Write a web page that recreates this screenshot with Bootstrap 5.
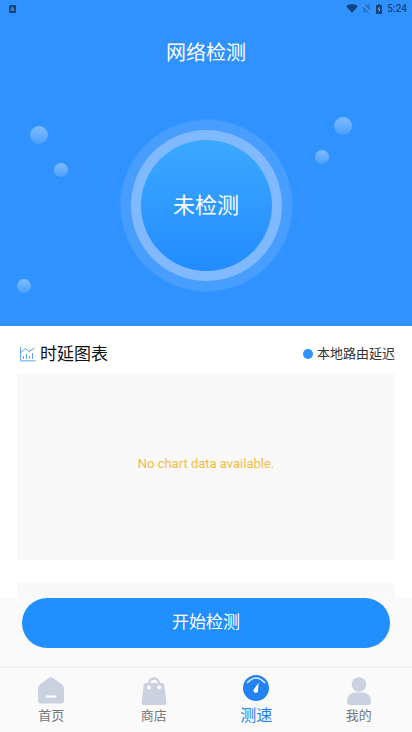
<!DOCTYPE html>
<html lang="zh-CN">
<head>
<meta charset="utf-8">
<meta name="viewport" content="width=device-width, initial-scale=1">
<title>网络检测</title>
<link href="https://cdn.jsdelivr.net/npm/bootstrap@5.3.0/dist/css/bootstrap.min.css" rel="stylesheet">
<style>
body { font-family: Roboto, "Noto Sans CJK SC", sans-serif; background: #fff; color: #111; }
.scroller { scrollbar-width: none; min-height: 0; }
.scroller::-webkit-scrollbar { display: none; }
.hero { background: #2f92ff; padding-bottom: 34px; }
.status-bar { height: 17px; padding: 0 5px 0 9px; color: #12447f; font-size: 10px; line-height: 17px; font-weight: 500; }
.page-title { font-size: 20px; line-height: 28px; margin: 22px 0 52px; font-weight: 400; }
.halo { width: 173px; height: 173px; background: #479eff; border: 1px solid #3c98ff; }
.ring { width: 151px; height: 151px; background: #80b9ff; }
.dial { width: 131px; height: 131px; font-size: 22px; background: linear-gradient(#3ba9ff, #228cff); }
.bubble { position: absolute; width: 14px; height: 14px; border-radius: 50%; background: linear-gradient(#80bbff, #4ba0ff); }
.bubble-lg { width: 18px; height: 18px; }
.b1 { left: 7.2%; top: 126px; }
.b2 { left: 13.2%; top: 163px; }
.b3 { left: 4.2%; top: 279px; }
.b4 { right: 14.5%; top: 117px; }
.b5 { right: 20.2%; top: 150px; }
.content { padding: 0 17px; }
.chart-head { height: 48px; padding: 8px 0 0 3px; }
.section-title { font-size: 17px; line-height: 24px; font-weight: 400; margin: 0; }
.legend-text { font-size: 13px; color: #333; }
.dot { width: 10px; height: 10px; background: #2f92ff; }
.panel { height: 186px; padding-bottom: 6px; background: #f9f9f9; color: #f0bd42; font-size: 13px; margin-bottom: 23px; }
.dock { background: #fafafa; }
.action { padding: 0 22px 18px; }
.start { height: 50px; background: #208fff; font-size: 17px; }
.start:hover { background: #1783f0; }
.tabs { height: 66px; padding-right: 2px; border-top: 2px solid #f3f3f3; }
.tab { color: #777; font-size: 13px; line-height: 20px; padding-bottom: 6px; }
.tab.active { color: #2482ee; font-size: 16px; }
.tab svg { margin-bottom: 1px; }
</style>
<script src="https://cdn.jsdelivr.net/npm/bootstrap@5.3.0/dist/js/bootstrap.bundle.min.js"></script>
</head>
<body>
<div class="vh-100 d-flex flex-column">
  <main class="scroller flex-grow-1 overflow-auto">
    <header class="hero position-relative text-white text-center">
      <div class="status-bar d-flex align-items-center">
        <svg width="7" height="8" viewBox="0 0 7 8" aria-hidden="true"><rect width="7" height="8" rx="1" fill="#12447f"/><path d="M1.7 6 3.5 2.2 5.3 6M2.4 4.8h2.2" fill="none" stroke="#72a9e8" stroke-width=".8"/></svg>
        <svg class="ms-auto" width="12" height="9" viewBox="0 0 12 9" aria-hidden="true"><path d="M0 2Q6-2 12 2L6 9Z" fill="#12447f"/></svg>
        <svg class="ms-1" width="9" height="9" viewBox="0 0 9 9" aria-hidden="true"><path d="M1 3 4 .5h4v8H1Z" fill="#2678d5"/><path d="m1 1 7 7" stroke="#65aaf7" stroke-width="1"/></svg>
        <svg class="mx-1" width="8" height="10" viewBox="0 0 8 10" aria-hidden="true"><path d="M1 1h2V0h2v1h2v9H1Z" fill="#12447f"/><path d="M4.4 2 2.6 5.5H4L3.7 8.5 5.5 5H4.2Z" fill="#83b7ee"/></svg>
        <span>5:24</span>
      </div>
      <h1 class="page-title">网络检测</h1>
      <div class="halo rounded-circle mx-auto d-flex align-items-center justify-content-center">
        <div class="ring rounded-circle d-flex align-items-center justify-content-center">
          <div class="dial rounded-circle d-flex align-items-center justify-content-center">未检测</div>
        </div>
      </div>
      <i class="bubble bubble-lg b1"></i><i class="bubble b2"></i><i class="bubble b3"></i><i class="bubble bubble-lg b4"></i><i class="bubble b5"></i>
    </header>
    <section class="content">
      <div class="chart-head d-flex align-items-center justify-content-between">
        <div class="d-flex align-items-center gap-1">
          <svg width="16" height="16" viewBox="0 0 16 16" fill="none" stroke="#5aa2f2" aria-hidden="true"><path d="M.6 1v13.900h14.900M3.500 13v-3M6.500 13V8M9.500 13v-3M12.500 13V7"/><path d="M1 6.500 5.500 2.500 8.800 5.500 14.500 2"/></svg>
          <h2 class="section-title">时延图表</h2>
        </div>
        <div class="d-flex align-items-center gap-1"><span class="dot rounded-circle"></span><span class="legend-text">本地路由延迟</span></div>
      </div>
      <div class="panel d-flex align-items-center justify-content-center">No chart data available.</div>
      <div class="panel"></div>
    </section>
  </main>
  <footer class="dock">
    <div class="action"><button type="button" class="start btn w-100 rounded-pill border-0 text-white p-0">开始检测</button></div>
    <nav class="tabs d-flex" aria-label="主导航">
      <a href="#home" class="tab flex-fill w-25 d-flex flex-column align-items-center justify-content-end text-decoration-none">
        <svg width="26" height="28" viewBox="0 0 26 28" aria-hidden="true"><path d="M10.500 1.200Q13-.5 15.500 1.200L24 7.500Q26 9 26 11.500V23Q26 26.500 22.500 26.500H3.500Q0 26.500 0 23V11.500Q0 9 2 7.500Z" fill="#c9d2de"/><path d="M8.500 19.500h9" stroke="#fff" stroke-width="2" stroke-linecap="round"/></svg>
        首页</a>
      <a href="#shop" class="tab flex-fill w-25 d-flex flex-column align-items-center justify-content-end text-decoration-none">
        <svg width="26" height="28" viewBox="0 0 26 28" aria-hidden="true"><path d="M8 9V6.500a5 5 0 0 1 10 0V9" fill="none" stroke="#c9d2de" stroke-width="2.400"/><path d="M5 6h16q2 0 2.300 2L25.300 25q.2 3-2.300 3H3Q.5 28 .7 25L2.700 8Q3 6 5 6Z" fill="#c9d2de"/><circle cx="7.800" cy="10.500" r="1.900" fill="#fff"/><circle cx="18.200" cy="10.500" r="1.900" fill="#fff"/></svg>
        商店</a>
      <a href="#speed" aria-current="page" class="tab active flex-fill w-25 d-flex flex-column align-items-center justify-content-end text-decoration-none">
        <svg width="26" height="30" viewBox="0 0 26 30" aria-hidden="true"><circle cx="13" cy="13" r="13" fill="#2482f2"/><path d="M4.500 7.500Q13-1.500 21.500 7.500" fill="none" stroke="#d9ebff" stroke-width="1.700" stroke-linecap="round"/><path d="m15.600 8-4.700 6.200a2.300 2.300 0 1 0 4.200 1.500Z" fill="#fff"/></svg>
        测速</a>
      <a href="#me" class="tab flex-fill w-25 d-flex flex-column align-items-center justify-content-end text-decoration-none">
        <svg width="26" height="28" viewBox="0 0 26 28" aria-hidden="true"><circle cx="13" cy="7.500" r="7.300" fill="#c9d2de"/><path d="M1 25q0-9.500 9-9.500h6q9 0 9 9.500 0 3-3 3H4q-3 0-3-3Z" fill="#c9d2de"/></svg>
        我的</a>
    </nav>
  </footer>
</div>
</body>
</html>
